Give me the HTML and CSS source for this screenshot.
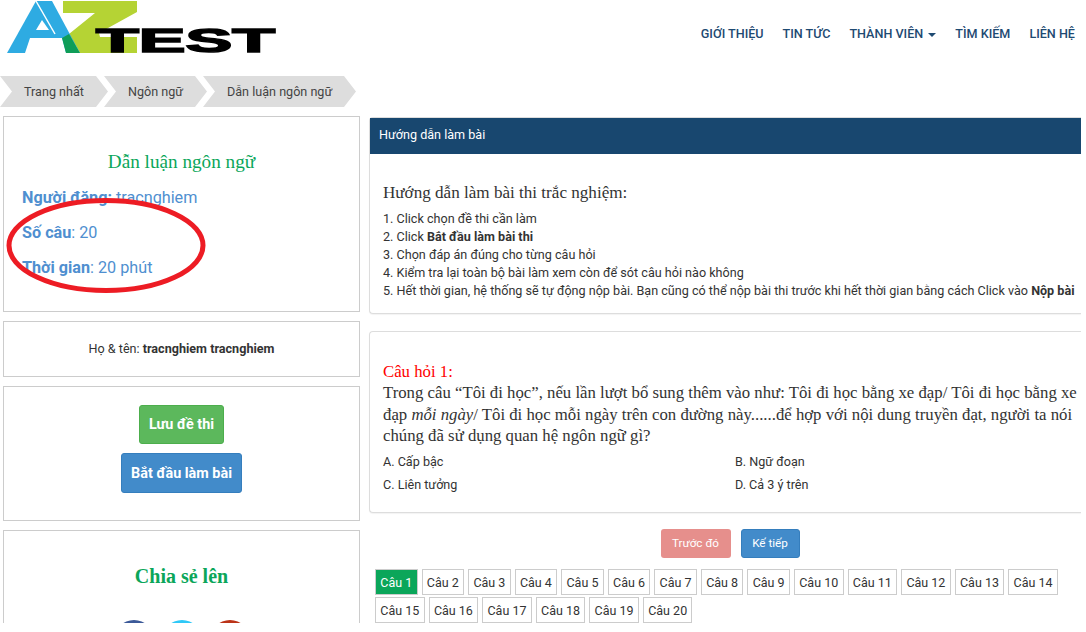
FILE: index.html
```html
<!DOCTYPE html>
<html lang="vi">
<head>
    <meta charset="UTF-8">
    <title>Dẫn luận ngôn ngữ</title>
    <link rel="stylesheet" href="styles.css">
</head>
<body>
    <div class="page">
        <header class="topbar">
            <svg class="logo" width="280" height="54" viewBox="0 0 280 54">
                <polygon points="63,1 137,1 137,12 99,33 100,37 137,37 137,53 80,53 69,34 95,13 63,13" fill="#b5d334"/>
                <polygon points="36,1 52,1 80,53 7,53" fill="#2eabe2"/>
                <polygon points="42,20 36,30 49,30" fill="#fff"/>
                <polygon points="30,38 62,38 66,53 25,53" fill="#fff"/>
                <line x1="36" y1="1" x2="55" y2="34" stroke="#fff" stroke-width="1.5"/>
                <polygon points="62,38 69,34 80,53 66,53" fill="#0f9d58"/>
                <text class="logo-word" x="96" y="52" textLength="179" lengthAdjust="spacingAndGlyphs">TEST</text>
            </svg>
            <nav class="menu">
                <a href="#">GIỚI THIỆU</a>
                <a href="#">TIN TỨC</a>
                <a href="#">THÀNH VIÊN <span class="caret"></span></a>
                <a href="#">TÌM KIẾM</a>
                <a href="#">LIÊN HỆ</a>
            </nav>
        </header>

        <div class="crumbs">
            <a href="#" class="crumb">Trang nhất</a>
            <a href="#" class="crumb">Ngôn ngữ</a>
            <a href="#" class="crumb">Dẫn luận ngôn ngữ</a>
        </div>

        <div class="columns">
            <aside class="side">
                <div class="box box-info">
                    <h3 class="exam-title">Dẫn luận ngôn ngữ</h3>
                    <p class="meta"><b>Người đăng:</b> tracnghiem</p>
                    <p class="meta"><b>Số câu</b>: 20</p>
                    <p class="meta"><b>Thời gian</b>: 20 phút</p>
                    <svg class="circle" width="210" height="104" viewBox="0 0 210 104">
                        <ellipse cx="100" cy="49.5" rx="97" ry="45" fill="none" stroke="#ed1c24" stroke-width="5"/>
                    </svg>
                </div>
                <div class="box box-name">Họ &amp; tên: <b>tracnghiem tracnghiem</b></div>
                <div class="box box-actions">
                    <a href="#" class="btn btn-green">Lưu đề thi</a>
                    <a href="#" class="btn btn-blue">Bắt đầu làm bài</a>
                </div>
                <div class="box box-share">
                    <h3 class="share-title">Chia sẻ lên</h3>
                    <div class="share-icons">
                        <span class="dot dot-fb"></span>
                        <span class="dot dot-tw"></span>
                        <span class="dot dot-gp"></span>
                    </div>
                </div>
            </aside>

            <main class="main">
                <section class="panel panel-guide">
                    <div class="panel-head">Hướng dẫn làm bài</div>
                    <div class="panel-body">
                        <h4 class="guide-title">Hướng dẫn làm bài thi trắc nghiệm:</h4>
                        <div class="guide-line">1. Click chọn đề thi cần làm</div>
                        <div class="guide-line">2. Click <b>Bắt đầu làm bài thi</b></div>
                        <div class="guide-line">3. Chọn đáp án đúng cho từng câu hỏi</div>
                        <div class="guide-line">4. Kiểm tra lại toàn bộ bài làm xem còn để sót câu hỏi nào không</div>
                        <div class="guide-line">5. Hết thời gian, hệ thống sẽ tự động nộp bài. Bạn cũng có thể nộp bài thi trước khi hết thời gian bằng cách Click vào <b>Nộp bài</b></div>
                    </div>
                </section>

                <section class="panel panel-question">
                    <div class="q-label">Câu hỏi 1:</div>
                    <div class="q-text">Trong câu “Tôi đi học”, nếu lần lượt bổ sung thêm vào như: Tôi đi học bằng xe đạp/ Tôi đi học bằng xe đạp <i>mỗi ngày</i>/ Tôi đi học mỗi ngày trên con đường này......để hợp với nội dung truyền đạt, người ta nói chúng đã sử dụng quan hệ ngôn ngữ gì?</div>
                    <div class="answers">
                        <div>A. Cấp bậc</div>
                        <div>B. Ngữ đoạn</div>
                        <div>C. Liên tưởng</div>
                        <div>D. Cả 3 ý trên</div>
                    </div>
                </section>

                <div class="pager">
                    <a href="#" class="btn-small btn-prev">Trước đó</a>
                    <a href="#" class="btn-small btn-next">Kế tiếp</a>
                </div>

                <div class="numbers">
                    <a href="#" class="num active">Câu 1</a>
                    <a href="#" class="num">Câu 2</a>
                    <a href="#" class="num">Câu 3</a>
                    <a href="#" class="num">Câu 4</a>
                    <a href="#" class="num">Câu 5</a>
                    <a href="#" class="num">Câu 6</a>
                    <a href="#" class="num">Câu 7</a>
                    <a href="#" class="num">Câu 8</a>
                    <a href="#" class="num">Câu 9</a>
                    <a href="#" class="num">Câu 10</a>
                    <a href="#" class="num">Câu 11</a>
                    <a href="#" class="num">Câu 12</a>
                    <a href="#" class="num">Câu 13</a>
                    <a href="#" class="num">Câu 14</a>
                    <a href="#" class="num">Câu 15</a>
                    <a href="#" class="num">Câu 16</a>
                    <a href="#" class="num">Câu 17</a>
                    <a href="#" class="num">Câu 18</a>
                    <a href="#" class="num">Câu 19</a>
                    <a href="#" class="num">Câu 20</a>
                </div>
            </main>
        </div>
    </div>
</body>
</html>
```

FILE: styles.css
```css
* {
    box-sizing: border-box;
}

html, body {
    margin: 0;
    padding: 0;
    height: 632px;
    overflow: hidden;
    background: #fff;
}

body {
    font-family: Roboto, "Liberation Sans", sans-serif;
    font-size: 12.6px;
    color: #333;
}

a {
    text-decoration: none;
}

.page {
    width: 1081px;
    height: 623px;
    overflow: hidden;
}

.topbar {
    display: flex;
    justify-content: space-between;
    height: 76px;
}

.logo {
    display: block;
}

.logo-word {
    font-family: "Liberation Sans", sans-serif;
    font-weight: 700;
    font-size: 33px;
    fill: #000;
    stroke: #000;
    stroke-width: 1.5px;
}

.menu {
    display: flex;
    gap: 19px;
    padding: 26px 6px 0 0;
}

.menu a {
    font-size: 12.6px;
    font-weight: 500;
    line-height: 15px;
    color: #1e4a72;
}

.caret {
    display: inline-block;
    vertical-align: middle;
    margin-left: 2px;
    border-top: 4px solid #1e4a72;
    border-left: 4px solid transparent;
    border-right: 4px solid transparent;
}

.crumbs {
    display: flex;
    height: 31px;
}

.crumb {
    display: block;
    height: 31px;
    line-height: 31px;
    padding-left: 24px;
    margin-right: -4px;
    background: #ddd;
    font-size: 12.6px;
    white-space: nowrap;
    color: #444;
    clip-path: polygon(0 0, calc(100% - 12px) 0, 100% 50%, calc(100% - 12px) 100%, 0 100%, 12px 50%);
}

.crumb:first-child {
    width: 108px;
}

.crumb:nth-child(2) {
    width: 103px;
}

.crumb:nth-child(3) {
    width: 153px;
}

.columns {
    display: flex;
    gap: 9px;
    padding: 9px 0 0 3px;
}

.side {
    width: 357px;
    flex: none;
}

.box {
    position: relative;
    border: 1px solid #ccc;
    background: #fff;
    margin-bottom: 9px;
}

.box-info {
    height: 196px;
    padding: 34px 18px 0;
}

.exam-title {
    margin: 0 0 14px;
    font-family: "Liberation Serif", serif;
    font-size: 19.2px;
    font-weight: 400;
    line-height: 22px;
    text-align: center;
    color: #0ba65a;
}

.meta {
    margin: 0 0 14px;
    font-size: 16.2px;
    line-height: 21px;
    color: #4f8fd0;
}

.circle {
    position: absolute;
    left: 2px;
    top: 79px;
}

.box-name {
    height: 56px;
    line-height: 54px;
    text-align: center;
}

.box-actions {
    display: flex;
    flex-direction: column;
    align-items: center;
    gap: 9px;
    height: 135px;
    padding-top: 18px;
}

.btn {
    display: block;
    border-radius: 3px;
    border: 1px solid transparent;
    font-size: 14.4px;
    font-weight: 700;
    white-space: nowrap;
    color: #fff;
}

.btn-green {
    width: 85px;
    height: 39px;
    line-height: 37px;
    text-align: center;
    background: #5cb85c;
    border-color: #4cae4c;
}

.btn-blue {
    width: 121px;
    height: 40px;
    line-height: 39px;
    text-align: center;
    background: #428bca;
    border-color: #357ebd;
}

.box-share {
    height: 140px;
    padding-top: 33px;
}

.share-title {
    margin: 0;
    font-family: "Liberation Serif", serif;
    font-size: 20px;
    font-weight: 700;
    line-height: 24px;
    text-align: center;
    color: #0ba65a;
}

.share-icons {
    display: flex;
    justify-content: center;
    gap: 8px;
    margin-top: 32px;
}

.dot {
    display: block;
    width: 40px;
    height: 40px;
    border-radius: 50%;
}

.dot-fb {
    background: #3b5998;
}

.dot-tw {
    background: #2fc8f7;
}

.dot-gp {
    background: #bb3318;
}

.main {
    width: 712px;
    flex: none;
    margin-top: 1px;
}

.panel {
    border: 1px solid #ddd;
    border-right: 0;
    border-radius: 4px 0 0 4px;
    box-shadow: 0 1px 1px rgba(0, 0, 0, 0.05);
    background: #fff;
}

.panel-guide {
    height: 197px;
    margin-bottom: 17px;
}

.panel-head {
    height: 36px;
    line-height: 33px;
    padding-left: 9px;
    background: #18476f;
    color: #fff;
}

.panel-body {
    padding: 28px 0 0 13px;
}

.guide-title {
    margin: 0 0 6px;
    font-family: "Liberation Serif", serif;
    font-size: 17.1px;
    font-weight: 400;
    line-height: 22px;
    color: #333;
}

.guide-line {
    line-height: 18px;
    white-space: nowrap;
}

.panel-question {
    height: 182px;
    padding: 29px 3px 0 13px;
}

.q-label {
    font-family: "Liberation Serif", serif;
    font-size: 16.75px;
    line-height: 21px;
    color: #f00;
}

.q-text {
    font-family: "Liberation Serif", serif;
    font-size: 16.75px;
    line-height: 21.5px;
    color: #333;
}

.answers {
    display: grid;
    grid-template-columns: 352px 1fr;
    row-gap: 5px;
    margin-top: 6px;
    line-height: 18px;
}

.pager {
    display: flex;
    justify-content: center;
    gap: 10px;
    margin-top: 16px;
    padding-left: 10px;
}

.btn-small {
    display: block;
    height: 29px;
    line-height: 27px;
    text-align: center;
    border-radius: 3px;
    border: 1px solid transparent;
    font-size: 11.7px;
    color: #fff;
}

.btn-prev {
    width: 70px;
    background: #e68f8c;
}

.btn-next {
    width: 59px;
    background: #428bca;
    border-color: #357ebd;
}

.numbers {
    display: flex;
    flex-wrap: wrap;
    gap: 2px 4px;
    margin-top: 11px;
    padding-left: 6px;
}

.num {
    display: block;
    height: 26px;
    line-height: 26px;
    padding: 0 4.3px;
    border: 1px solid #ccc;
    font-size: 12.5px;
    color: #333;
    background: #fff;
}

.num.active {
    background: #0ba65a;
    color: #fff;
}
```
